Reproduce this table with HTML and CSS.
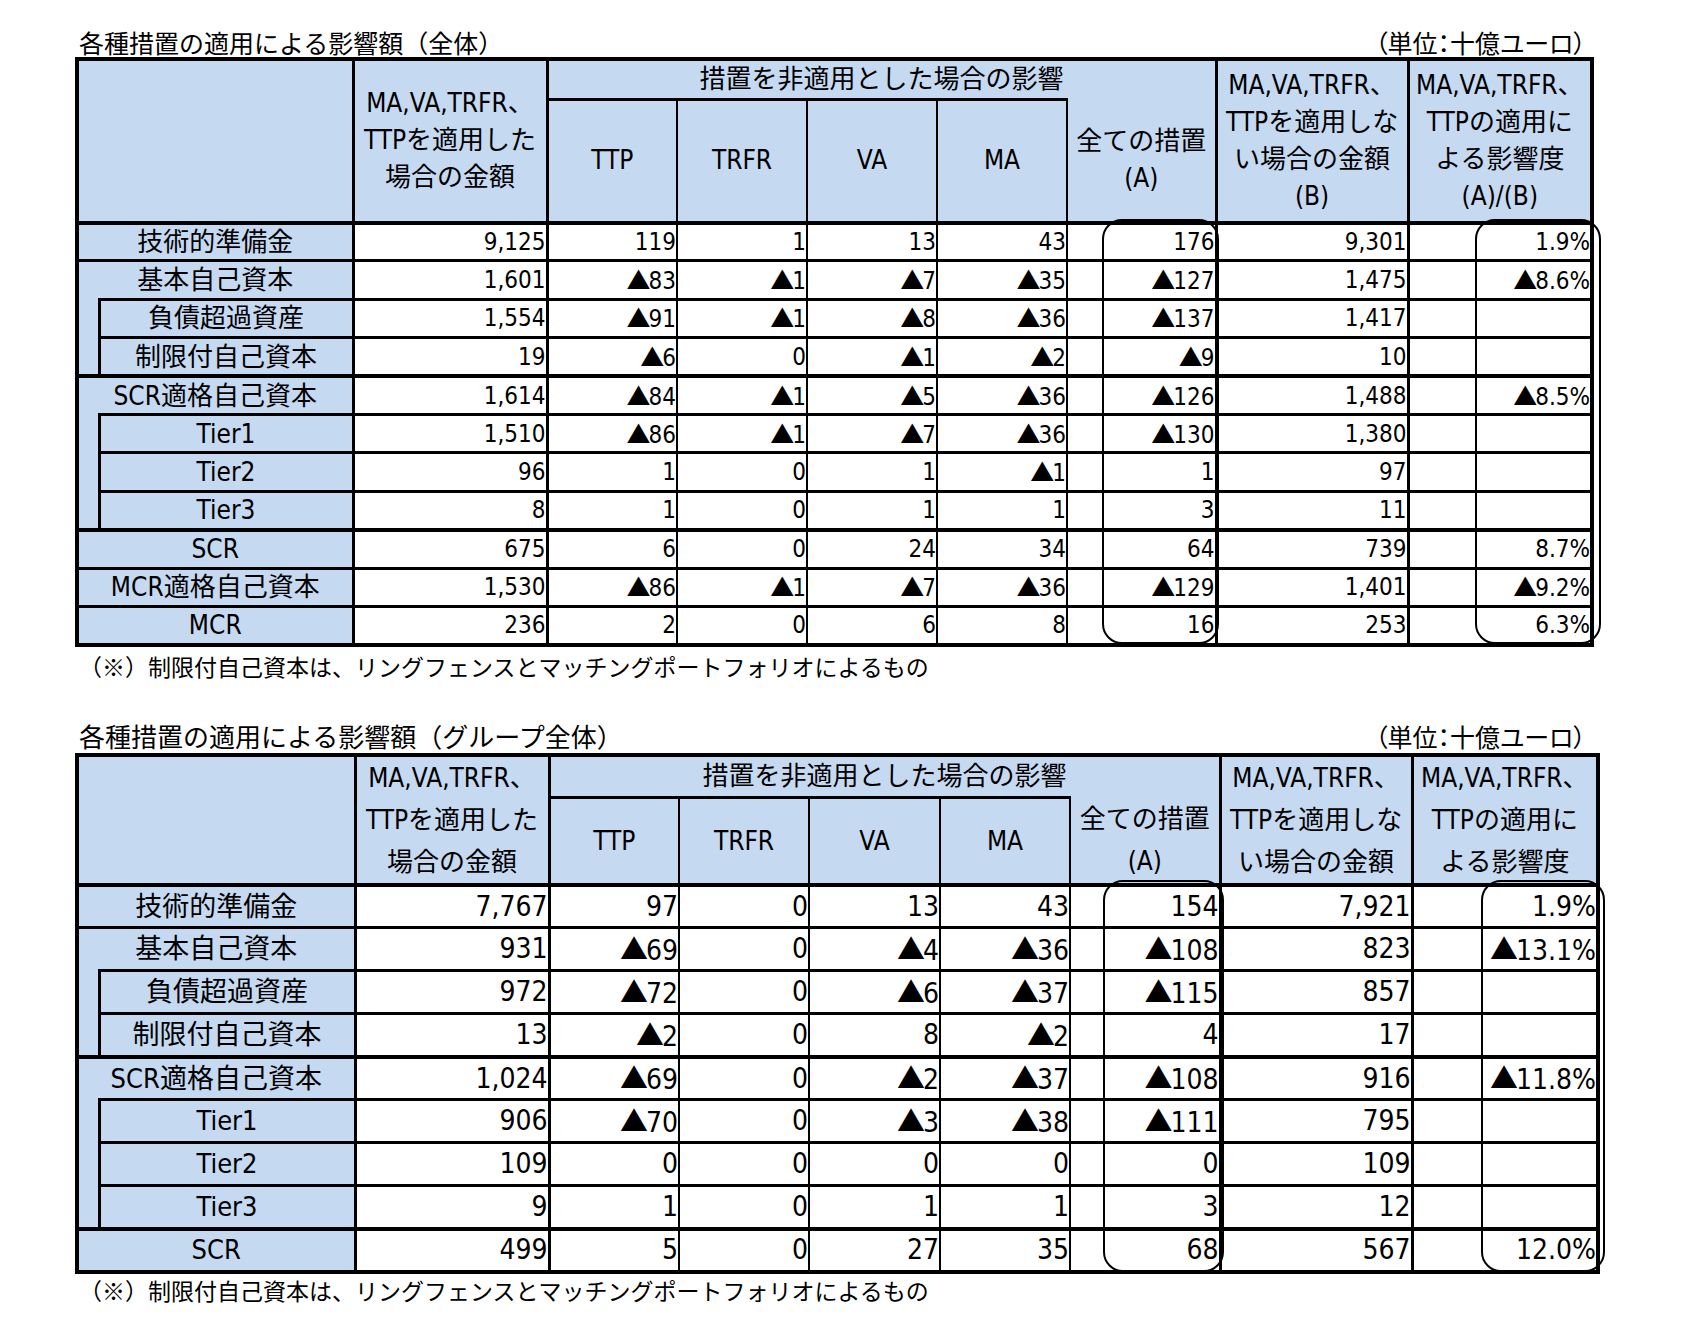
FILE: index.html
```html
<!DOCTYPE html>
<html lang="ja">
<head>
<meta charset="utf-8">
<title>各種措置の適用による影響額</title>
<link rel="stylesheet" href="styles.css">
</head>
<body>
<div class="page">
  <section class="block b1">
    <div class="cap"><span class="ttl">各種措置の適用による影響額（全体）</span><span class="unit">（単位：十億ユーロ）</span></div>
    <div class="tw">
      <table class="t t1">
        <colgroup><col class="c-ind"><col class="c-sub"><col class="c-2"><col class="c-m"><col class="c-m"><col class="c-va"><col class="c-m"><col class="c-all"><col class="c-b"><col class="c-r"></colgroup>
        <tr class="hr1">
          <td class="h" colspan="2" rowspan="2"></td>
          <td class="h bk c2h" rowspan="2">MA,VA,TRFR、<br>TTPを適用した<br>場合の金額</td>
          <td class="h bk span" colspan="5">措置を非適用とした場合の影響</td>
          <td class="h bk" rowspan="2">MA,VA,TRFR、<br>TTPを適用しな<br>い場合の金額<br>(B)</td>
          <td class="h bk" rowspan="2">MA,VA,TRFR、<br>TTPの適用に<br>よる影響度<br>(A)/(B)</td>
        </tr>
        <tr class="hr2">
          <td class="h bk">TTP</td><td class="h">TRFR</td><td class="h">VA</td><td class="h">MA</td><td class="h allh">全ての措置<br>(A)</td>
        </tr>
        <tr class="dr first"><td class="l" colspan="2">技術的準備金</td><td class="n bk">9,125</td><td class="n bk">119</td><td class="n">1</td><td class="n">13</td><td class="n">43</td><td class="n">176</td><td class="n bk">9,301</td><td class="n bk">1.9%</td></tr>
        <tr class="dr"><td class="l" colspan="2">基本自己資本</td><td class="n bk">1,601</td><td class="n bk"><span class="tri">▲</span>83</td><td class="n"><span class="tri">▲</span>1</td><td class="n"><span class="tri">▲</span>7</td><td class="n"><span class="tri">▲</span>35</td><td class="n"><span class="tri">▲</span>127</td><td class="n bk">1,475</td><td class="n bk"><span class="tri">▲</span>8.6%</td></tr>
        <tr class="dr"><td class="ind" rowspan="2"></td><td class="l sub">負債超過資産</td><td class="n bk">1,554</td><td class="n bk"><span class="tri">▲</span>91</td><td class="n"><span class="tri">▲</span>1</td><td class="n"><span class="tri">▲</span>8</td><td class="n"><span class="tri">▲</span>36</td><td class="n"><span class="tri">▲</span>137</td><td class="n bk">1,417</td><td class="n bk"></td></tr>
        <tr class="dr"><td class="l sub">制限付自己資本</td><td class="n bk">19</td><td class="n bk"><span class="tri">▲</span>6</td><td class="n">0</td><td class="n"><span class="tri">▲</span>1</td><td class="n"><span class="tri">▲</span>2</td><td class="n"><span class="tri">▲</span>9</td><td class="n bk">10</td><td class="n bk"></td></tr>
        <tr class="dr sep"><td class="l" colspan="2">SCR適格自己資本</td><td class="n bk">1,614</td><td class="n bk"><span class="tri">▲</span>84</td><td class="n"><span class="tri">▲</span>1</td><td class="n"><span class="tri">▲</span>5</td><td class="n"><span class="tri">▲</span>36</td><td class="n"><span class="tri">▲</span>126</td><td class="n bk">1,488</td><td class="n bk"><span class="tri">▲</span>8.5%</td></tr>
        <tr class="dr"><td class="ind" rowspan="3"></td><td class="l sub">Tier1</td><td class="n bk">1,510</td><td class="n bk"><span class="tri">▲</span>86</td><td class="n"><span class="tri">▲</span>1</td><td class="n"><span class="tri">▲</span>7</td><td class="n"><span class="tri">▲</span>36</td><td class="n"><span class="tri">▲</span>130</td><td class="n bk">1,380</td><td class="n bk"></td></tr>
        <tr class="dr"><td class="l sub">Tier2</td><td class="n bk">96</td><td class="n bk">1</td><td class="n">0</td><td class="n">1</td><td class="n"><span class="tri">▲</span>1</td><td class="n">1</td><td class="n bk">97</td><td class="n bk"></td></tr>
        <tr class="dr"><td class="l sub">Tier3</td><td class="n bk">8</td><td class="n bk">1</td><td class="n">0</td><td class="n">1</td><td class="n">1</td><td class="n">3</td><td class="n bk">11</td><td class="n bk"></td></tr>
        <tr class="dr sep"><td class="l" colspan="2">SCR</td><td class="n bk">675</td><td class="n bk">6</td><td class="n">0</td><td class="n">24</td><td class="n">34</td><td class="n">64</td><td class="n bk">739</td><td class="n bk">8.7%</td></tr>
        <tr class="dr"><td class="l" colspan="2">MCR適格自己資本</td><td class="n bk">1,530</td><td class="n bk"><span class="tri">▲</span>86</td><td class="n"><span class="tri">▲</span>1</td><td class="n"><span class="tri">▲</span>7</td><td class="n"><span class="tri">▲</span>36</td><td class="n"><span class="tri">▲</span>129</td><td class="n bk">1,401</td><td class="n bk"><span class="tri">▲</span>9.2%</td></tr>
        <tr class="dr"><td class="l" colspan="2">MCR</td><td class="n bk">236</td><td class="n bk">2</td><td class="n">0</td><td class="n">6</td><td class="n">8</td><td class="n">16</td><td class="n bk">253</td><td class="n bk">6.3%</td></tr>
      </table>
      <div class="ov ov-all"></div>
      <div class="ov ov-ratio"></div>
    </div>
    <p class="note">（※）制限付自己資本は、リングフェンスとマッチングポートフォリオによるもの</p>
  </section>

  <section class="block b2">
    <div class="cap"><span class="ttl">各種措置の適用による影響額（グループ全体）</span><span class="unit">（単位：十億ユーロ）</span></div>
    <div class="tw">
      <table class="t t2">
        <colgroup><col class="c-ind"><col class="c-sub"><col class="c-2"><col class="c-m"><col class="c-m"><col class="c-va"><col class="c-m"><col class="c-all"><col class="c-b"><col class="c-r"></colgroup>
        <tr class="hr1">
          <td class="h" colspan="2" rowspan="2"></td>
          <td class="h bk c2h" rowspan="2">MA,VA,TRFR、<br>TTPを適用した<br>場合の金額</td>
          <td class="h bk span" colspan="5">措置を非適用とした場合の影響</td>
          <td class="h bk" rowspan="2">MA,VA,TRFR、<br>TTPを適用しな<br>い場合の金額</td>
          <td class="h bk" rowspan="2">MA,VA,TRFR、<br>TTPの適用に<br>よる影響度</td>
        </tr>
        <tr class="hr2">
          <td class="h bk">TTP</td><td class="h">TRFR</td><td class="h">VA</td><td class="h">MA</td><td class="h allh">全ての措置<br>(A)</td>
        </tr>
        <tr class="dr first"><td class="l" colspan="2">技術的準備金</td><td class="n bk">7,767</td><td class="n bk">97</td><td class="n">0</td><td class="n">13</td><td class="n">43</td><td class="n">154</td><td class="n bk">7,921</td><td class="n bk">1.9%</td></tr>
        <tr class="dr"><td class="l" colspan="2">基本自己資本</td><td class="n bk">931</td><td class="n bk"><span class="tri">▲</span>69</td><td class="n">0</td><td class="n"><span class="tri">▲</span>4</td><td class="n"><span class="tri">▲</span>36</td><td class="n"><span class="tri">▲</span>108</td><td class="n bk">823</td><td class="n bk"><span class="tri">▲</span>13.1%</td></tr>
        <tr class="dr"><td class="ind" rowspan="2"></td><td class="l sub">負債超過資産</td><td class="n bk">972</td><td class="n bk"><span class="tri">▲</span>72</td><td class="n">0</td><td class="n"><span class="tri">▲</span>6</td><td class="n"><span class="tri">▲</span>37</td><td class="n"><span class="tri">▲</span>115</td><td class="n bk">857</td><td class="n bk"></td></tr>
        <tr class="dr"><td class="l sub">制限付自己資本</td><td class="n bk">13</td><td class="n bk"><span class="tri">▲</span>2</td><td class="n">0</td><td class="n">8</td><td class="n"><span class="tri">▲</span>2</td><td class="n">4</td><td class="n bk">17</td><td class="n bk"></td></tr>
        <tr class="dr sep"><td class="l" colspan="2">SCR適格自己資本</td><td class="n bk">1,024</td><td class="n bk"><span class="tri">▲</span>69</td><td class="n">0</td><td class="n"><span class="tri">▲</span>2</td><td class="n"><span class="tri">▲</span>37</td><td class="n"><span class="tri">▲</span>108</td><td class="n bk">916</td><td class="n bk"><span class="tri">▲</span>11.8%</td></tr>
        <tr class="dr"><td class="ind" rowspan="3"></td><td class="l sub">Tier1</td><td class="n bk">906</td><td class="n bk"><span class="tri">▲</span>70</td><td class="n">0</td><td class="n"><span class="tri">▲</span>3</td><td class="n"><span class="tri">▲</span>38</td><td class="n"><span class="tri">▲</span>111</td><td class="n bk">795</td><td class="n bk"></td></tr>
        <tr class="dr"><td class="l sub">Tier2</td><td class="n bk">109</td><td class="n bk">0</td><td class="n">0</td><td class="n">0</td><td class="n">0</td><td class="n">0</td><td class="n bk">109</td><td class="n bk"></td></tr>
        <tr class="dr"><td class="l sub">Tier3</td><td class="n bk">9</td><td class="n bk">1</td><td class="n">0</td><td class="n">1</td><td class="n">1</td><td class="n">3</td><td class="n bk">12</td><td class="n bk"></td></tr>
        <tr class="dr sep"><td class="l" colspan="2">SCR</td><td class="n bk">499</td><td class="n bk">5</td><td class="n">0</td><td class="n">27</td><td class="n">35</td><td class="n">68</td><td class="n bk">567</td><td class="n bk">12.0%</td></tr>
      </table>
      <div class="ov ov-all"></div>
      <div class="ov ov-ratio"></div>
    </div>
    <p class="note">（※）制限付自己資本は、リングフェンスとマッチングポートフォリオによるもの</p>
  </section>
</div>
</body>
</html>
```
FILE: styles.css
```css
body {
  margin: 0;
  background: #ffffff;
  color: #000000;
  font-family: "Liberation Sans Narrow", "DejaVu Sans Condensed", "Noto Sans CJK JP", sans-serif;
}

.page {
  padding: 27px 0 0 75px;
}

.cap {
  display: flex;
  justify-content: space-between;
  align-items: baseline;
  height: 30px;
  line-height: 30px;
  font-family: "Noto Sans CJK JP", sans-serif;
  white-space: nowrap;
}

.b1 .cap { width: 1515px; }
.b2 .cap { width: 1521px; margin-bottom: 2px; }

.ttl {
  font-size: 25px;
  padding-left: 4px;
}

.b2 .ttl { font-size: 26px; }

.unit {
  font-size: 25px;
  font-feature-settings: "palt";
  padding-right: 4px;
}

.b2 .unit { padding-right: 10px; }

.b2 { margin-top: 41px; }

.tw {
  position: relative;
}

.t {
  border-collapse: collapse;
  table-layout: fixed;
  border: 4px solid #000;
}

.t1 { width: 1515px; }
.t2 { width: 1521px; }

.c-ind { width: 22px; }
.c-2 { width: 194px; }
.c-m { width: 130px; }
.c-b { width: 192px; }
.t1 .c-sub { width: 254px; }
.t2 .c-sub { width: 256px; }
.t1 .c-va { width: 130px; }
.t2 .c-va { width: 131px; }
.t1 .c-all { width: 149px; }
.t2 .c-all { width: 150px; }
.t1 .c-r { width: 184px; }
.t2 .c-r { width: 186px; }

.t td {
  border-style: solid;
  border-color: #000;
  border-width: 3px 2px;
  padding: 0;
  vertical-align: middle;
  white-space: nowrap;
}

.t .bk { border-left-width: 3px; }
.t .sub { border-left-width: 3px; }
.t .first td { border-top-width: 4px; }
.t .sep td { border-top-width: 4px; }

.t1 .hr1 { height: 38px; }
.t1 .hr2 { height: 123px; }
.t1 .dr { height: 38.4px; }
.t2 .hr1 { height: 42px; }
.t2 .hr2 { height: 86px; }
.t2 .dr { height: 43px; }

.h {
  background: #c5d9f1;
  text-align: center;
  font-size: 26px;
  line-height: 37px;
}

.t2 .h { line-height: 42px; }
.t2 .span { line-height: 36px; }

.t .allh { border-top-style: hidden; }

.l {
  background: #c5d9f1;
  text-align: center;
  line-height: 30px;
}

.t1 .l { font-size: 26px; }
.t2 .l { font-size: 27px; }

.ind {
  background: #c5d9f1;
}

.t .ind { border-top-style: hidden; border-right-width: 3px; }

.n {
  text-align: right;
  padding-right: 7px;
  line-height: 30px;
}

.t1 .n { font-size: 24px; }
.t2 .n { font-size: 28px; }

.tri {
  font-family: "Noto Sans CJK JP", sans-serif;
  letter-spacing: -2px;
}

.ov {
  position: absolute;
  border: 2px solid #000;
  border-radius: 20px;
  pointer-events: none;
}

.b1 .ov { top: 162px; height: 421px; }
.b1 .ov-all { left: 1027px; width: 113px; }
.b1 .ov-ratio { left: 1400px; width: 122px; }

.b2 .ov { top: 127px; height: 388px; }
.b2 .ov-all { left: 1028px; width: 117px; }
.b2 .ov-ratio { left: 1406px; width: 120px; }

.note {
  margin: 5px 0 0 0;
  padding-left: 4px;
  font-family: "Noto Sans CJK JP", sans-serif;
  font-size: 23px;
  line-height: 28px;
  white-space: nowrap;
}

.b2 .note { margin-top: 2px; }
```
